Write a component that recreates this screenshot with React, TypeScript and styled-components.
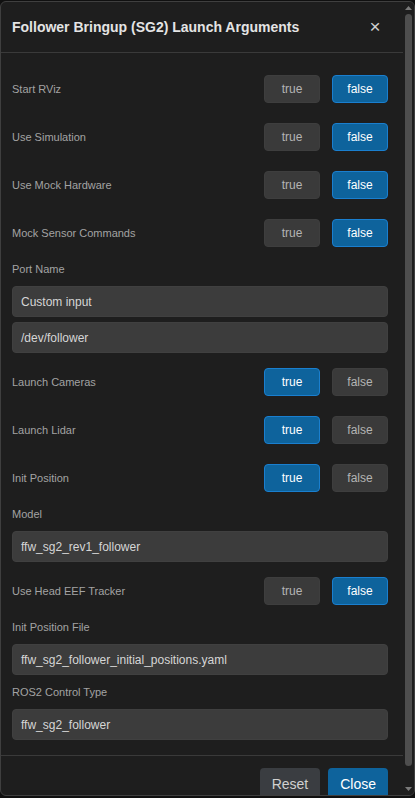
import React from "react";
import styled, { createGlobalStyle } from "styled-components";

const Global = createGlobalStyle`
  html, body {
    margin: 0;
    padding: 0;
    background: #101010;
    font-family: "Liberation Sans", Arial, sans-serif;
  }
  * { box-sizing: border-box; }
`;

const Page = styled.div`
  padding-top: 1px;
  height: 798px;
`;

const Modal = styled.div`
  display: flex;
  height: 795px;
  background: #1e1e1e;
  border: 1px solid #3f3f3f;
  border-radius: 6px;
  overflow: hidden;
`;

const Scroller = styled.div`
  flex: 1;
  min-width: 0;
  overflow: hidden;
`;

const ScrollBar = styled.div`
  width: 11px;
  display: flex;
  flex-direction: column;
  align-items: center;
  background: #1e1e1e;
`;

const Arrow = styled.div`
  height: 12px;
  width: 100%;
  display: flex;
  align-items: center;
  justify-content: center;
`;

const Thumb = styled.div`
  width: 7px;
  height: 752px;
  border-radius: 4px;
  background: #4e4e4e;
`;

const Spacer = styled.div`
  flex: 1;
`;

const Header = styled.div`
  display: flex;
  align-items: center;
  justify-content: space-between;
  padding: 15px 15px 15px 11px;
  border-bottom: 1px solid #3a3a3a;
`;

const Title = styled.h2`
  margin: 0;
  font-size: 14px;
  line-height: 20px;
  font-weight: 700;
  color: #e4e4e4;
`;

const CloseX = styled.button`
  width: 26px;
  height: 20px;
  padding: 0;
  border: none;
  background: transparent;
  color: #d0d0d0;
  font-family: "Liberation Sans", Arial, sans-serif;
  font-size: 19px;
  line-height: 20px;
  cursor: pointer;
`;

const Body = styled.div`
  display: flex;
  flex-direction: column;
  gap: 10px;
  padding: 17px 15px 15px 11px;
`;

const ToggleRow = styled.div`
  display: flex;
  align-items: center;
  justify-content: space-between;
  height: 38px;
`;

const Label = styled.span`
  font-size: 11px;
  line-height: 14px;
  color: #a3a3a3;
`;

const Group = styled.div`
  display: flex;
  gap: 12px;
`;

const ToggleButton = styled.button<{ $active: boolean }>`
  width: 56px;
  height: 28px;
  padding: 0;
  border-radius: 4px;
  font-family: "Liberation Sans", Arial, sans-serif;
  font-size: 12px;
  border: 1px solid ${(p) => (p.$active ? "#1a7fcf" : "#3e3e3e")};
  background: ${(p) => (p.$active ? "#0e639c" : "#3a3a3a")};
  color: ${(p) => (p.$active ? "#ffffff" : "#b4b4b4")};
`;

const Field = styled.div`
  display: flex;
  flex-direction: column;
`;

const FieldLabel = styled(Label)`
  display: block;
  margin-bottom: 10px;
`;

const Inputs = styled.div`
  display: flex;
  flex-direction: column;
  gap: 5px;
`;

const TextBox = styled.div`
  height: 31px;
  display: flex;
  align-items: center;
  padding: 0 8px;
  background: #3c3c3c;
  border: 1px solid #404040;
  border-radius: 4px;
  font-size: 12px;
  color: #d6d6d6;
`;

const Footer = styled.div`
  display: flex;
  justify-content: flex-end;
  gap: 8px;
  padding: 12px 15px 12px 11px;
  border-top: 1px solid #3a3a3a;
`;

const FooterButton = styled.button<{ $primary?: boolean }>`
  height: 32px;
  padding: 0 12px;
  border: none;
  border-radius: 4px;
  font-family: "Liberation Sans", Arial, sans-serif;
  font-size: 14px;
  background: ${(p) => (p.$primary ? "#0e639c" : "#3a3d41")};
  color: ${(p) => (p.$primary ? "#ffffff" : "#d0d0d0")};
`;

type Item =
  | { kind: "bool"; label: string; value: boolean }
  | { kind: "text"; label: string; values: string[] };

const items: Item[] = [
  { kind: "bool", label: "Start RViz", value: false },
  { kind: "bool", label: "Use Simulation", value: false },
  { kind: "bool", label: "Use Mock Hardware", value: false },
  { kind: "bool", label: "Mock Sensor Commands", value: false },
  { kind: "text", label: "Port Name", values: ["Custom input", "/dev/follower"] },
  { kind: "bool", label: "Launch Cameras", value: true },
  { kind: "bool", label: "Launch Lidar", value: true },
  { kind: "bool", label: "Init Position", value: true },
  { kind: "text", label: "Model", values: ["ffw_sg2_rev1_follower"] },
  { kind: "bool", label: "Use Head EEF Tracker", value: false },
  { kind: "text", label: "Init Position File", values: ["ffw_sg2_follower_initial_positions.yaml"] },
  { kind: "text", label: "ROS2 Control Type", values: ["ffw_sg2_follower"] },
];

const Tri = ({ up }: { up?: boolean }) => (
  <svg width="7" height="4" viewBox="0 0 7 4">
    <path d={up ? "M0 4 L3.5 0 L7 4 Z" : "M0 0 L3.5 4 L7 0 Z"} fill="#7a7a7a" />
  </svg>
);

export default function App() {
  return (
    <Page>
      <Global />
      <Modal>
        <Scroller>
          <Header>
            <Title>Follower Bringup (SG2) Launch Arguments</Title>
            <CloseX aria-label="Close">×</CloseX>
          </Header>
          <Body>
            {items.map((it) =>
              it.kind === "bool" ? (
                <ToggleRow key={it.label}>
                  <Label>{it.label}</Label>
                  <Group>
                    <ToggleButton $active={it.value}>true</ToggleButton>
                    <ToggleButton $active={!it.value}>false</ToggleButton>
                  </Group>
                </ToggleRow>
              ) : (
                <Field key={it.label}>
                  <FieldLabel>{it.label}</FieldLabel>
                  <Inputs>
                    {it.values.map((v) => (
                      <TextBox key={v}>{v}</TextBox>
                    ))}
                  </Inputs>
                </Field>
              )
            )}
          </Body>
          <Footer>
            <FooterButton>Reset</FooterButton>
            <FooterButton $primary>Close</FooterButton>
          </Footer>
        </Scroller>
        <ScrollBar>
          <Arrow>
            <Tri up />
          </Arrow>
          <Thumb />
          <Spacer />
          <Arrow>
            <Tri />
          </Arrow>
        </ScrollBar>
      </Modal>
    </Page>
  );
}
